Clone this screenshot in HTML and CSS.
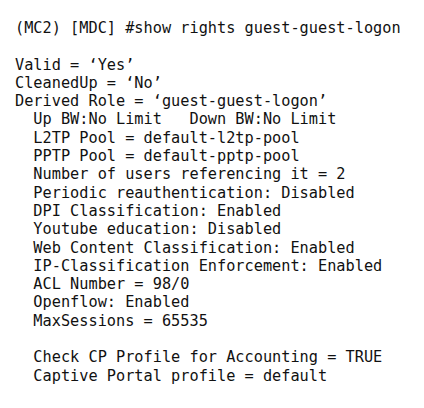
FILE: index.html
```html
<!DOCTYPE html>
<html>
<head>
<meta charset="utf-8">
<link rel="stylesheet" href="styles.css">
</head>
<body>
<pre class="cli">(MC2) [MDC] #show rights guest-guest-logon

Valid = ‘Yes’
CleanedUp = ‘No’
Derived Role = ‘guest-guest-logon’
  Up BW:No Limit   Down BW:No Limit
  L2TP Pool = default-l2tp-pool
  PPTP Pool = default-pptp-pool
  Number of users referencing it = 2
  Periodic reauthentication: Disabled
  DPI Classification: Enabled
  Youtube education: Disabled
  Web Content Classification: Enabled
  IP-Classification Enforcement: Enabled
  ACL Number = 98/0
  Openflow: Enabled
  MaxSessions = 65535

  Check CP Profile for Accounting = TRUE
  Captive Portal profile = default</pre>
</body>
</html>
```
FILE: styles.css
```css
html, body {
  margin: 0;
  padding: 0;
  background: #ffffff;
}
.cli {
  margin: 0;
  padding: 19px 0 0 15px;
  font-family: "DejaVu Sans Mono", "Liberation Mono", monospace;
  font-size: 15.25px;
  line-height: 18.3px;
  color: #111111;
  white-space: pre;
}
```
